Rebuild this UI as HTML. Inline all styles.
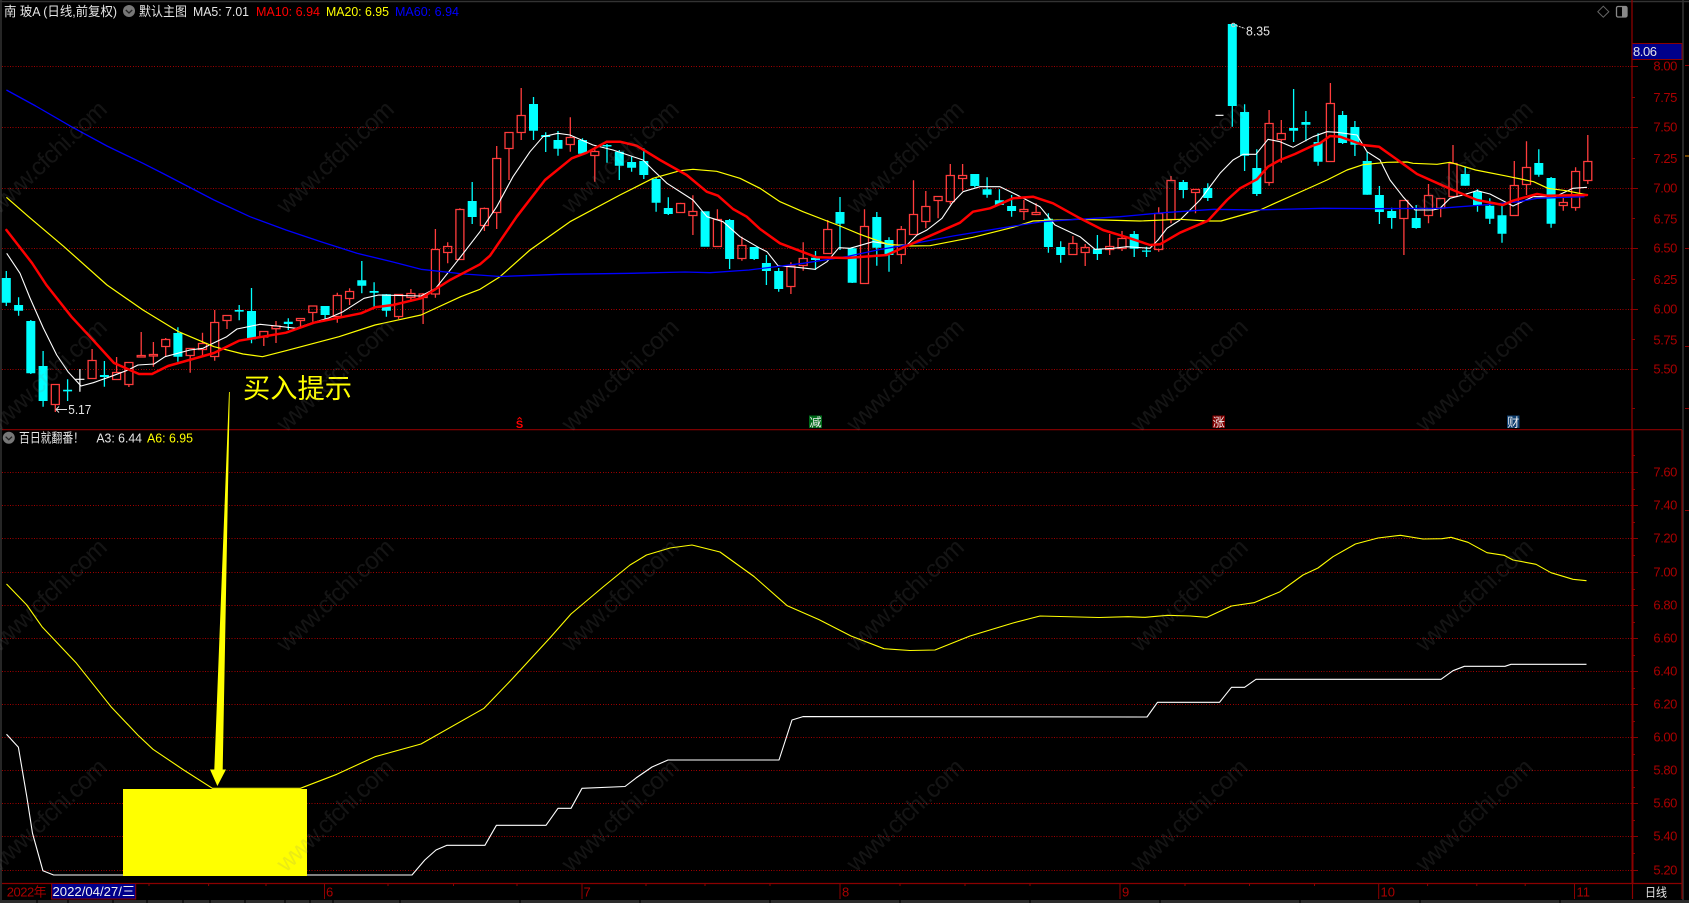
<!DOCTYPE html>
<html lang="zh"><head><meta charset="utf-8"><title>南玻A</title>
<style>
html,body{margin:0;padding:0;background:#000;width:1689px;height:903px;overflow:hidden}
svg{display:block;position:absolute;left:0;top:0}
text{font-family:"Liberation Sans","Noto Sans CJK SC",sans-serif}
</style></head><body>
<svg width="1689" height="903" viewBox="0 0 1689 903" xmlns="http://www.w3.org/2000/svg">
<rect width="1689" height="903" fill="#000"/>
<!-- frame -->
<path d="M0 1.5H1689" stroke="#333" stroke-width="1.5"/>
<path d="M1 0V903" stroke="#333" stroke-width="1.5"/>
<path d="M1683 0V900" stroke="#333" stroke-width="1.5"/>
<!-- grid main -->
<g stroke="#a00000" stroke-width="1" stroke-dasharray="1 1.67" fill="none" shape-rendering="crispEdges">
<path d="M2 66.5H1632M2 127.5H1632M2 188.5H1632M2 248.5H1632M2 309.5H1632M2 369.5H1632"/>
<path d="M2 472.5H1632M2 505.5H1632M2 538.5H1632M2 572.5H1632M2 605.5H1632M2 638.5H1632M2 671.5H1632M2 704.5H1632M2 737.5H1632M2 770.5H1632M2 803.5H1632M2 836.5H1632M2 870.5H1632"/>
</g>
<!-- axes -->
<g stroke="#8b0000" fill="none">
<path d="M1632 0V430" stroke-width="1.3"/>
<path d="M1632.5 430V883" stroke-width="2"/>
<path d="M2 429.7H1682" stroke-width="1.2"/>
<path d="M2 883.5H1682" stroke-width="1.2"/>
<path d="M1682 430V899" stroke-width="1.2"/>
<path d="M1632.5 883V899" stroke-width="1.2"/>
<path d="M1632 66.5h6M1632 127.5h6M1632 188.5h6M1632 248.5h6M1632 309.5h6M1632 369.5h6M1632 97.5h3M1632 158.5h3M1632 218.5h3M1632 279.5h3M1632 339.5h3M1632 408.5h3" stroke-width="1"/>
<path d="M1632 472.5h6M1632 505.5h6M1632 538.5h6M1632 572.5h6M1632 605.5h6M1632 638.5h6M1632 671.5h6M1632 704.5h6M1632 737.5h6M1632 770.5h6M1632 803.5h6M1632 836.5h6M1632 870.5h6M1632 455.5h3M1632 489.5h3M1632 522.5h3M1632 555.5h3M1632 589.5h3M1632 622.5h3M1632 655.5h3M1632 688.5h3M1632 721.5h3M1632 754.5h3M1632 787.5h3M1632 820.5h3M1632 853.5h3" stroke-width="1"/>
<path d="M324.5 884V899M582 884V899M840 884V899M1120 884V899M1378.7 884V899M1574.5 884V899M51.7 884V899" stroke-width="1"/>
<path d="M149 884v2M208.6 884v2M266 884v2M388 884v2M453.5 884v2M517 884v2M646 884v2M705 884v2M770 884v2M900 884v2M965 884v2M1030 884v2M1185 884v2M1249.5 884v2M1314.5 884v2M1427.6 884v2M1476.8 884v2M1525.2 884v2" stroke-width="1"/>
<path d="M1685 65.5h4M1685 248.5h4M1685 346.5h4M1685 408.5h4M1685 510.5h4" stroke-width="1"/>
</g>
<path d="M1685 156h4" stroke="#e08a00" stroke-width="1"/>
<!-- bottom strip -->
<rect x="0" y="900" width="1689" height="3" fill="#2c2c2c"/>
<path d="M37 900v3M68 900v3M113 900v3M147 900v3M183 900v3M210 900v3M245 900v3M285 900v3M310 900v3M333 900v3M400 900v3M520 900v3M640 900v3M770 900v3M900 900v3M1030 900v3M1160 900v3M1300 900v3M1420 900v3M1560 900v3" stroke="#000" stroke-width="1.2"/>
<!-- wicks and bodies: cyan -->
<path fill="none" stroke="#00ffff" stroke-width="1.3" d="M6.3 271V306M18.6 297.3V315.7M30.8 320V374M43.1 351V406.7M67.6 379.3V401M104.4 361V386.7M177.9 327.3V361.7M239.2 305V320.3M251.5 288V343.3M288.3 318.3V330M325.1 306V320M361.8 261V293.3M374.1 282.3V306.7M386.4 294V316.7M472.2 182V224M533.5 97V140M545.7 132.3V152M558 131V155.7M582.5 138.3V153.7M607 144V162.7M619.3 150V180M631.6 156.7V171.7M643.8 148.3V179M656.1 178V211.7M668.3 197.3V215M729.6 219V269M754.2 247V260M766.4 255V285M778.7 268V291.7M815.5 251V270M840 197V250M852.2 247V283M876.8 212V265.7M889 237.3V271.7M974.8 174V187.3M987.1 177.3V197.7M999.4 189.3V205M1011.6 195V216.7M1048.4 213.3V252.7M1060.7 241.3V262.7M1097.4 235V260M1134.2 231V257M1146.5 246.7V257M1183.3 180V198.3M1207.8 183.3V201M1232.3 24V126.7M1244.6 104.3V171M1256.8 149.3V196M1293.6 89V142M1305.9 111V141.3M1318.1 133.3V165.7M1342.6 111V144M1354.9 121V156M1367.2 151.7V194.7M1379.4 186V224M1391.7 207.7V228.7M1416.2 205V228.7M1465.2 166.7V185.7M1477.5 189.3V211.7M1489.8 198.3V224M1502 206V242.7M1538.8 149.3V176.7M1551.1 177V227.7"/>
<path fill="#00ffff" d="M1.8 278h9v24.7h-9zM14.1 305h9v5.7h-9zM26.3 321h9v52.3h-9zM38.6 366h9v35h-9zM63.1 389.8h9v1.6h-9zM99.9 375h9v2h-9zM173.4 333h9v23.7h-9zM234.7 310h9v1.6h-9zM247 311h9v28.3h-9zM283.8 321.7h9v2.3h-9zM320.6 306h9v9h-9zM357.3 280.3h9v5.4h-9zM369.6 291h9v1.7h-9zM381.9 294.3h9v16.4h-9zM467.7 201h9v16h-9zM529 104h9v26.7h-9zM541.2 135h9v2h-9zM553.5 140h9v8.7h-9zM578 140h9v13.7h-9zM602.5 145h9v1.5h-9zM614.8 151.7h9v14h-9zM627.1 162h9v5.7h-9zM639.3 161h9v14h-9zM651.6 179h9v23.7h-9zM663.8 208h9v6h-9zM700.6 211.3h9v35.4h-9zM725.1 220h9v39h-9zM749.7 247h9v12h-9zM761.9 263h9v8h-9zM774.2 271h9v18h-9zM811 257.7h9v2.3h-9zM835.5 212h9v11.7h-9zM847.7 248.3h9v34.4h-9zM872.3 217h9v30.7h-9zM884.5 240h9v15h-9zM970.3 174h9v12h-9zM982.6 189.3h9v5.4h-9zM994.9 200.3h9v4.7h-9zM1007.1 206h9v5h-9zM1043.9 218.7h9v28.3h-9zM1056.2 247h9v8h-9zM1092.9 249h9v5h-9zM1129.7 234h9v14.7h-9zM1142 250.5h9v1.2h-9zM1178.8 182h9v8h-9zM1203.3 188h9v10h-9zM1227.8 24h9v82h-9zM1240.1 112h9v43.7h-9zM1252.3 168h9v26h-9zM1289.1 128h9v2.7h-9zM1301.4 122h9v2.7h-9zM1313.6 142h9v19.7h-9zM1338.1 115h9v28h-9zM1350.4 127h9v17.7h-9zM1362.7 161h9v33.7h-9zM1374.9 195h9v17h-9zM1387.2 211h9v7h-9zM1411.7 218h9v10h-9zM1460.7 174h9v11.7h-9zM1473 191.7h9v13.3h-9zM1485.3 205.7h9v13h-9zM1497.5 215.3h9v18.4h-9zM1534.3 163h9v11.7h-9zM1546.6 178h9v45.7h-9z"/>
<!-- white doji -->
<path fill="none" stroke="#fff" stroke-width="1.2" d="M79.9 369V391.7M75.4 379.3h9M1215.5 115.3h8"/>
<!-- red candles -->
<path fill="none" stroke="#ff3c3c" stroke-width="1.3" d="M55.3 404.5V412M51.3 384.5h8v20h-8zM92.1 349V360.5M88.1 360.5h8v18h-8zM116.6 357V372.5M112.6 372.5h8v7h-8zM128.9 384.5V387M124.9 362.5h8v22h-8zM141.2 332V355.5M137.2 355.5h8v1.5h-8zM153.4 342V354.5M153.4 355.5V366.7M149.4 354.5h8v1.5h-8zM165.7 338V339.5M165.7 346.5V356.7M161.7 339.5h8v7h-8zM190.2 355.5V372.7M186.2 348.5h8v7h-8zM202.5 332.7V343.5M202.5 349.5V356M198.5 343.5h8v6h-8zM214.7 310V322.5M214.7 356.5V360.7M210.7 322.5h8v34h-8zM227 320.5V329M223 315.5h8v5h-8zM263.8 337V346M259.8 331.5h8v5.5h-8zM276 321V326M276 328.7V343M272 326h8v2.7h-8zM300.5 320.5V328.3M296.5 318.5h8v2h-8zM312.8 312.5V321.7M308.8 306h8v6.5h-8zM337.3 292.7V295.5M337.3 316.5V322.7M333.3 295.5h8v21h-8zM349.6 288.3V291.5M349.6 298.5V305M345.6 291.5h8v7h-8zM398.6 316.5V319M394.6 294.5h8v22h-8zM410.9 289V293.5M410.9 297.5V301.7M406.9 293.5h8v4h-8zM423.1 293V294M423.1 297.5V324M419.1 294h8v3.5h-8zM435.4 229V249.5M435.4 294V297.7M431.4 249.5h8v44.5h-8zM447.7 242.3V246.5M447.7 252.5V263.3M443.7 246.5h8v6h-8zM459.9 208.3V209.5M455.9 209.5h8v50h-8zM484.4 207.5V208.5M484.4 225.5V231M480.4 208.5h8v17h-8zM496.7 146V158.5M496.7 212.5V229M492.7 158.5h8v54h-8zM509 148.5V180M505 132.5h8v16h-8zM521.2 88V115.5M521.2 132.5V140M517.2 115.5h8v17h-8zM570.3 117.3V137.5M570.3 144.5V151.7M566.3 137.5h8v7h-8zM594.8 146.7V151.5M594.8 155.5V181.7M590.8 151.5h8v4h-8zM680.6 202.7V203.5M676.6 203.5h8v9h-8zM692.9 195.3V211.5M692.9 215.5V235M688.9 211.5h8v4h-8zM717.4 209.3V219.5M713.4 219.5h8v27h-8zM741.9 236.7V245.5M741.9 258.5V260.7M737.9 245.5h8v13h-8zM790.9 262.3V266M790.9 286.5V294M786.9 266h8v20.5h-8zM803.2 242.3V258.5M803.2 265.5V270.7M799.2 258.5h8v7h-8zM827.7 220V229.5M823.7 229.5h8v24h-8zM864.5 209.3V226.5M860.5 226.5h8v57h-8zM901.3 226V229.5M901.3 254.5V264M897.3 229.5h8v25h-8zM913.5 180.3V214.5M909.5 214.5h8v20h-8zM925.8 191V206.5M925.8 221.5V228.3M921.8 206.5h8v15h-8zM938.1 200.5V218.3M934.1 196.5h8v4h-8zM950.3 164V175.5M950.3 201.5V204.3M946.3 175.5h8v26h-8zM962.6 164V175.5M962.6 178.5V190.7M958.6 175.5h8v3h-8zM1023.9 200V209.5M1023.9 211.5V220M1019.9 209.5h8v2h-8zM1036.1 203.3V212.5M1036.1 214.5V215.3M1032.1 212.5h8v2h-8zM1072.9 236V243.5M1068.9 243.5h8v11h-8zM1085.2 244V247.5M1085.2 252.5V266M1081.2 247.5h8v5h-8zM1109.7 234V246.5M1109.7 249.5V255M1105.7 246.5h8v3h-8zM1122 231V238.5M1122 248.5V251M1118 238.5h8v10h-8zM1158.7 207.3V213.5M1158.7 249.5V251.7M1154.7 213.5h8v36h-8zM1171 176V180.5M1171 219.5V223.3M1167 180.5h8v39h-8zM1195.5 192.5V213.3M1191.5 189.5h8v3h-8zM1269.1 110V123.5M1269.1 182.5V185.7M1265.1 123.5h8v59h-8zM1281.3 120V133.5M1281.3 139.5V162.7M1277.3 133.5h8v6h-8zM1330.4 83V103.5M1326.4 103.5h8v58h-8zM1403.9 200V200.5M1403.9 218.5V255M1399.9 200.5h8v18h-8zM1428.5 184V195.5M1428.5 215.5V223.3M1424.5 195.5h8v20h-8zM1440.7 208V217.3M1436.7 198.5h8v9.5h-8zM1453 145V163.5M1449 163.5h8v33h-8zM1514.3 161V185.5M1510.3 185.5h8v30h-8zM1526.5 141.3V167.5M1526.5 184.5V195M1522.5 167.5h8v17h-8zM1563.3 197.7V202.5M1563.3 205.5V210.7M1559.3 202.5h8v3h-8zM1575.6 167.3V171.5M1575.6 207.5V210.7M1571.6 171.5h8v36h-8zM1587.8 135V161.5M1587.8 180.5V184M1583.8 161.5h8v19h-8z"/>
<!-- MA5 white -->
<polyline fill="none" stroke="#fff" stroke-width="1.1" stroke-linejoin="round" points="6.7,253.3 20,273.3 30,298 43.3,328 56.7,355 68,371.7 81,386 93.3,382.7 113,375.7 128,370 138,365 154,364 165,356.7 190,350 203,348.3 213,343.3 226.7,336.7 237,329 260,324.3 276.7,326 296,328.3 310.7,323.3 328.6,318 343,311.7 364,298.3 378.6,295 421,296 435.7,288.3 460.7,256.7 480,231.7 496.7,206.7 513,176.7 530,151.7 543,136.7 558,133.3 570,135 593,145 613,150 643,160 653,170 667,183.3 693,200 707,216.7 723,221.7 740,236.7 760,248.3 767,251.7 778,265.7 797,267.3 815,269.3 827,261.7 839,247.7 850,248.3 873,241.7 893,245 907,245 917,235 927,230 942,218.3 952,203.3 963,191.7 980,186.7 1000,186.7 1017,195 1040,206.7 1055,225 1080,236.7 1095,249.3 1113,248.3 1127,246.7 1150,248.3 1158,240 1167,228.3 1180,220 1200,200 1220,173.3 1233,160 1243,154.3 1256,154.3 1268,139.3 1280,141.7 1293,147.3 1313,136.7 1327,131.7 1337,132.3 1357,135 1367,151.7 1380,160 1390,180 1403,196.7 1415,210 1433,210 1440,208.3 1450,198.3 1463,195 1477,190.7 1490,194 1513,206 1533,196.7 1555,196.7 1573,188.3 1587,187.3"/>
<!-- MA20 yellow -->
<polyline fill="none" stroke="#ffff00" stroke-width="1.2" stroke-linejoin="round" points="6.4,197.3 28.6,216.7 64,246.7 107,285 143,310 178.6,331.7 214,346.7 243,354 262.5,356.7 286,350.7 339,336.7 375,325 421,315 460.7,296.7 480,289.3 500,276.7 530,250 570,221.7 620,195 653,178.3 680,170.7 693,169.3 716.7,171.3 740,178.3 760,188.3 780,201.7 803,211.7 840,226 860,234.3 887,244 907,246 930,245.7 973,237.3 1013,227.3 1033,221 1077,219.3 1103,220 1140,221 1180,219.3 1207,221 1221,221 1260,210 1277,202.3 1307,189 1327,180 1347,170 1363,164.7 1387,162.3 1407,162 1413,163.3 1437,164.3 1450,162.3 1475.6,170 1504.6,175.7 1533.6,181.7 1548,188.3 1566,190.7 1588,195"/>
<!-- MA60 blue -->
<polyline fill="none" stroke="#0000ff" stroke-width="1.3" stroke-linejoin="round" points="6.4,90 35.7,106 71.4,126.7 107,146 143,163.3 164,174 214,200 250,216.7 286,230 321,241.7 357,253.3 393,262 421,269.3 464,274 500,276.5 560,274.3 631,273.3 685,272 710,272.7 749,270 803,263.3 846,256.7 881,249.3 906,245 953,236 1006,227.3 1042,221.7 1078,219.3 1120,216.7 1163.5,212.7 1214,209.3 1254,210 1323,208.3 1374,208.7 1439,208.3 1483,205 1519,201.7 1537,198.3 1584.5,196.7"/>
<!-- MA10 red -->
<polyline fill="none" stroke="#ff0000" stroke-width="2.5" stroke-linejoin="round" stroke-linecap="round" points="6.4,230 32,263 46.4,285 71.4,316.7 93,340 114,363 139,374 152,374 168,366 214,353 239,340.7 286,332.7 314,322.7 361,313.3 375,307.3 393,305 421,298.3 450,280 480,264.3 490,255.7 516.7,216.7 545,180 571.7,158.3 586.7,152.7 606.7,141.7 620,141.7 636.7,145.7 660,160 686.7,175 706.7,191.7 718,195.7 733,209 746.7,216.7 760,229 780,243.3 816.7,257.3 846.7,258 886.7,255 906.7,246 960,222.7 973,211.7 990,208.3 1013,198.3 1033,196.7 1053,203.3 1080,218.3 1103,230 1127,237.3 1150,245 1160,244.3 1180,232.7 1208,220.7 1227,200 1240,188.3 1257,179.3 1268,166.7 1280,160 1295,154 1312,146 1320,143.3 1330,136 1340,136.7 1363,145 1379,146.7 1400,161.7 1417,174 1440,184.3 1453,190 1477,200 1503,205 1513,200.7 1537,194 1547,195.7 1587,195"/>
<!-- sub: A6 yellow -->
<polyline fill="none" stroke="#ffff00" stroke-width="1.1" stroke-linejoin="round" points="6.5,584 26.8,605 42,626.7 76.5,663.3 111,706.7 137.8,735 153,749.3 183.7,770 212.4,788.3 300.4,788.3 336.8,774.3 375,756.7 421,744 484,708.3 512.8,678.3 551,636.7 571,614 603,587 630,565 646.5,555 670,548 692,545 720,552 754,576.5 787,605.6 819,619.6 851,636 884,648.7 910,650.5 935,650 970,636 1013,623 1040,616 1099,617.5 1128,616.7 1145,617.3 1167.6,615.3 1190,616 1207,617.3 1231.5,606 1254,602.7 1280,591.7 1303,575 1318,568 1333,556.7 1355.4,544 1378,538 1400.5,535.3 1423,539 1442,538.7 1451,537.3 1468,542.3 1487,552.7 1504,555.3 1513,560 1536,564.3 1551,572.7 1573,579.3 1586.5,580.7"/>
<!-- sub: A3 white -->
<polyline fill="none" stroke="#fff" stroke-width="1.1" stroke-linejoin="round" points="6.5,734.3 18.4,747.3 26.8,796.7 32.5,833.3 42.9,870.7 53.6,875 412,875 424.8,860 436,850 447,845.3 484.9,845.3 496.4,825.3 546,825.3 558,808.3 571,808.3 582,788.3 625,786.5 636,778 652,767 668,760 779,760 792,720 803,716.6 1147,717 1157.5,702.3 1219.5,702.3 1231.5,687.3 1244.6,687.3 1256,679.3 1441,679.3 1453,670.7 1464.4,666.3 1505,666.3 1511,664.3 1586.5,664.3"/>
<!-- yellow block and arrow -->
<rect x="123" y="789" width="184" height="87" fill="#ffff00"/>
<polygon fill="#ffff00" points="229,392 229.8,392 222.7,769.5 226,769.5 217.4,786 210,769.5 214.3,769.5"/>
<text x="243" y="398" font-size="27" fill="#ffff00" textLength="109" lengthAdjust="spacingAndGlyphs">买入提示</text>
<!-- header -->
<g font-size="13">
<text x="4" y="16" fill="#e6e6e6" textLength="113" lengthAdjust="spacingAndGlyphs">南 玻A (日线,前复权)</text>
<circle cx="129" cy="11" r="6" fill="#777"/>
<path d="M125.8 10l3.2 3 3.2-3" fill="none" stroke="#222" stroke-width="1.3"/>
<text x="139" y="16" fill="#e6e6e6" textLength="48" lengthAdjust="spacingAndGlyphs">默认主图</text>
<text x="193" y="16" fill="#e6e6e6" textLength="56" lengthAdjust="spacingAndGlyphs">MA5: 7.01</text>
<text x="256" y="16" fill="#ff0000" textLength="64" lengthAdjust="spacingAndGlyphs">MA10: 6.94</text>
<text x="326" y="16" fill="#ffff00" textLength="63" lengthAdjust="spacingAndGlyphs">MA20: 6.95</text>
<text x="395" y="16" fill="#0000ff" textLength="64" lengthAdjust="spacingAndGlyphs">MA60: 6.94</text>
<circle cx="8.8" cy="437.7" r="6" fill="#777"/>
<path d="M5.6 436.7l3.2 3 3.2-3" fill="none" stroke="#222" stroke-width="1.3"/>
<text x="19" y="442.5" fill="#e6e6e6" textLength="65" lengthAdjust="spacingAndGlyphs">百日就翻番！</text>
<text x="96.4" y="442.5" fill="#e6e6e6" textLength="45.6" lengthAdjust="spacingAndGlyphs">A3: 6.44</text>
<text x="147" y="442.5" fill="#ffff00" textLength="46" lengthAdjust="spacingAndGlyphs">A6: 6.95</text>
</g>
<!-- top-right icons -->
<path d="M1603.3 6.2l5.5 5.5-5.5 5.5-5.5-5.5z" fill="none" stroke="#666" stroke-width="1"/>
<rect x="1616.5" y="6.5" width="10.5" height="10.5" rx="1.5" fill="none" stroke="#888" stroke-width="1.3"/>
<rect x="1622" y="7" width="4.5" height="9.5" fill="#888"/>
<!-- extremes labels -->
<path d="M1236 25.5l9 3" stroke="#ddd" stroke-width="1" stroke-dasharray="2 1" fill="none"/>
<circle cx="1233.3" cy="25" r="1.8" fill="none" stroke="#cfcfcf" stroke-width="1"/>
<text x="1246" y="35.5" font-size="13" fill="#e6e6e6" textLength="24" lengthAdjust="spacingAndGlyphs">8.35</text>
<path d="M67 409.5H56M59 406.5l-3 3 3 3" stroke="#ddd" stroke-width="1" fill="none"/>
<text x="68.3" y="414" font-size="13" fill="#e6e6e6" textLength="23" lengthAdjust="spacingAndGlyphs">5.17</text>
<!-- event markers -->
<text x="519.6" y="428" font-size="11" font-weight="bold" fill="#ff0000" text-anchor="middle">S</text>
<path d="M517.5 419.5l2.1-2 2.1 2" fill="none" stroke="#ff0000" stroke-width="1"/>
<rect x="809" y="415.5" width="13" height="12.5" fill="#006b1a"/>
<text x="815.5" y="426.5" font-size="12" fill="#eee" text-anchor="middle">减</text>
<rect x="1212.5" y="415.5" width="12.5" height="12.5" fill="#800000"/>
<text x="1218.8" y="426.5" font-size="12" fill="#eee" text-anchor="middle">涨</text>
<rect x="1507" y="415.5" width="12.5" height="12.5" fill="#0f3f70"/>
<text x="1513.2" y="426.5" font-size="12" fill="#eee" text-anchor="middle">财</text>
<!-- price labels -->
<g font-size="13" fill="#aa0000">
<text x="1653.4" y="70.5" textLength="24">8.00</text>
<text x="1653.4" y="102" textLength="24">7.75</text>
<text x="1653.4" y="131.5" textLength="24">7.50</text>
<text x="1653.4" y="163" textLength="24">7.25</text>
<text x="1653.4" y="192.5" textLength="24">7.00</text>
<text x="1653.4" y="223.5" textLength="24">6.75</text>
<text x="1653.4" y="252.5" textLength="24">6.50</text>
<text x="1653.4" y="284" textLength="24">6.25</text>
<text x="1653.4" y="313.5" textLength="24">6.00</text>
<text x="1653.4" y="344.5" textLength="24">5.75</text>
<text x="1653.4" y="373.5" textLength="24">5.50</text>
<text x="1653.4" y="476.5" textLength="24">7.60</text>
<text x="1653.4" y="509.5" textLength="24">7.40</text>
<text x="1653.4" y="542.5" textLength="24">7.20</text>
<text x="1653.4" y="576.5" textLength="24">7.00</text>
<text x="1653.4" y="609.5" textLength="24">6.80</text>
<text x="1653.4" y="642.5" textLength="24">6.60</text>
<text x="1653.4" y="675.5" textLength="24">6.40</text>
<text x="1653.4" y="708.5" textLength="24">6.20</text>
<text x="1653.4" y="741.5" textLength="24">6.00</text>
<text x="1653.4" y="774.5" textLength="24">5.80</text>
<text x="1653.4" y="807.5" textLength="24">5.60</text>
<text x="1653.4" y="840.5" textLength="24">5.40</text>
<text x="1653.4" y="874.5" textLength="24">5.20</text>
<text x="6.7" y="896.5" textLength="40">2022年</text>
<text x="326" y="896.5">6</text>
<text x="583.5" y="896.5">7</text>
<text x="842" y="896.5">8</text>
<text x="1122" y="896.5">9</text>
<text x="1380.5" y="896.5">10</text>
<text x="1576.5" y="896.5">11</text>
</g>
<rect x="1632" y="43.5" width="50" height="16" fill="#00008b" stroke="#8b0000" stroke-width="1"/>
<text x="1633" y="56" font-size="13" fill="#e6e6e6" textLength="24">8.06</text>
<rect x="51.7" y="883.5" width="84" height="15.5" fill="#00008b" stroke="#8b0000" stroke-width="1"/>
<text x="52.5" y="896" font-size="13" fill="#f0f0f0" textLength="82.5" lengthAdjust="spacingAndGlyphs">2022/04/27/三</text>
<text x="1645" y="896.5" font-size="12" fill="#e6e6e6" textLength="22" lengthAdjust="spacingAndGlyphs">日线</text>
<!-- watermark -->
<g font-size="24.5" fill="#808080" opacity="0.16">
<text transform="translate(-1 215) rotate(-43.5)" textLength="151">www.cfchi.com</text>
<text transform="translate(286 215) rotate(-43.5)" textLength="151">www.cfchi.com</text>
<text transform="translate(571 215) rotate(-43.5)" textLength="151">www.cfchi.com</text>
<text transform="translate(856 215) rotate(-43.5)" textLength="151">www.cfchi.com</text>
<text transform="translate(1140 215) rotate(-43.5)" textLength="151">www.cfchi.com</text>
<text transform="translate(1425 215) rotate(-43.5)" textLength="151">www.cfchi.com</text>
<text transform="translate(-1 433) rotate(-43.5)" textLength="151">www.cfchi.com</text>
<text transform="translate(286 433) rotate(-43.5)" textLength="151">www.cfchi.com</text>
<text transform="translate(571 433) rotate(-43.5)" textLength="151">www.cfchi.com</text>
<text transform="translate(856 433) rotate(-43.5)" textLength="151">www.cfchi.com</text>
<text transform="translate(1140 433) rotate(-43.5)" textLength="151">www.cfchi.com</text>
<text transform="translate(1425 433) rotate(-43.5)" textLength="151">www.cfchi.com</text>
<text transform="translate(-1 653) rotate(-43.5)" textLength="151">www.cfchi.com</text>
<text transform="translate(286 653) rotate(-43.5)" textLength="151">www.cfchi.com</text>
<text transform="translate(571 653) rotate(-43.5)" textLength="151">www.cfchi.com</text>
<text transform="translate(856 653) rotate(-43.5)" textLength="151">www.cfchi.com</text>
<text transform="translate(1140 653) rotate(-43.5)" textLength="151">www.cfchi.com</text>
<text transform="translate(1425 653) rotate(-43.5)" textLength="151">www.cfchi.com</text>
<text transform="translate(-1 873) rotate(-43.5)" textLength="151">www.cfchi.com</text>
<text transform="translate(286 873) rotate(-43.5)" textLength="151">www.cfchi.com</text>
<text transform="translate(571 873) rotate(-43.5)" textLength="151">www.cfchi.com</text>
<text transform="translate(856 873) rotate(-43.5)" textLength="151">www.cfchi.com</text>
<text transform="translate(1140 873) rotate(-43.5)" textLength="151">www.cfchi.com</text>
<text transform="translate(1425 873) rotate(-43.5)" textLength="151">www.cfchi.com</text>
</g>
</svg>
</body></html>
